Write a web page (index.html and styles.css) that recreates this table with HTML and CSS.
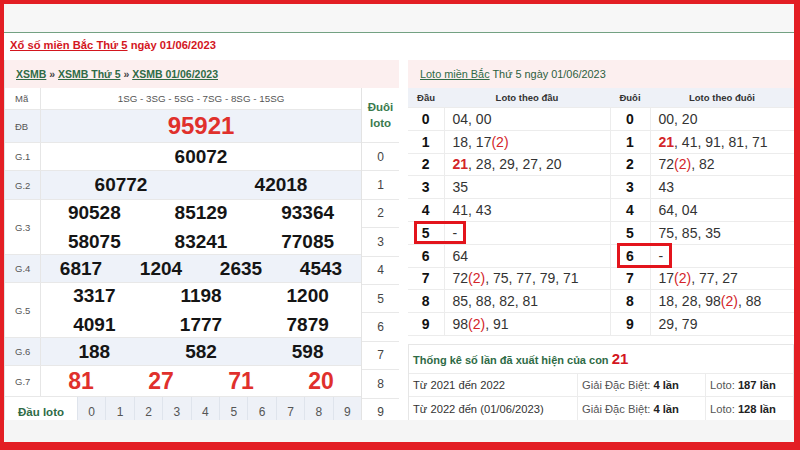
FILE: index.html
```html
<!DOCTYPE html>
<html lang="vi">
<head>
<meta charset="utf-8">
<title>XSMB 01/06/2023</title>
<link rel="stylesheet" href="styles.css">
</head>
<body>
<div class="frame">
  <div class="topbar"></div>
  <div class="content">
    <h1 class="title"><a href="#">Xổ số miền Bắc Thứ 5</a> ngày 01/06/2023</h1>
    <div class="cols">
      <section class="lp">
        <div class="lp-head"><a href="#">XSMB</a> » <a href="#">XSMB Thứ 5</a> » <a href="#">XSMB 01/06/2023</a></div>
        <div class="lp-body">
          <div class="draws">
            <div class="row r-ma"><div class="lbl">Mã</div><div class="val code">1SG - 3SG - 5SG - 7SG - 8SG - 15SG</div></div>
            <div class="row r-db alt"><div class="lbl">ĐB</div><div class="val c1"><span class="n big red">95921</span></div></div>
            <div class="row r-g1"><div class="lbl">G.1</div><div class="val c1"><span class="n">60072</span></div></div>
            <div class="row r-g2 alt"><div class="lbl">G.2</div><div class="val c2"><span class="n">60772</span><span class="n">42018</span></div></div>
            <div class="row r-g3"><div class="lbl">G.3</div><div class="val c3 two"><span class="n">90528</span><span class="n">85129</span><span class="n">93364</span><span class="n">58075</span><span class="n">83241</span><span class="n">77085</span></div></div>
            <div class="row r-g4 alt"><div class="lbl">G.4</div><div class="val c4"><span class="n">6817</span><span class="n">1204</span><span class="n">2635</span><span class="n">4543</span></div></div>
            <div class="row r-g5"><div class="lbl">G.5</div><div class="val c3 two"><span class="n">3317</span><span class="n">1198</span><span class="n">1200</span><span class="n">4091</span><span class="n">1777</span><span class="n">7879</span></div></div>
            <div class="row r-g6 alt"><div class="lbl">G.6</div><div class="val c3"><span class="n">188</span><span class="n">582</span><span class="n">598</span></div></div>
            <div class="row r-g7"><div class="lbl">G.7</div><div class="val c4"><span class="n g7 red">81</span><span class="n g7 red">27</span><span class="n g7 red">71</span><span class="n g7 red">20</span></div></div>
            <div class="row r-dau">
              <div class="dau-lbl">Đầu loto</div>
              <div class="dau-c">0</div><div class="dau-c">1</div><div class="dau-c">2</div><div class="dau-c">3</div><div class="dau-c">4</div>
              <div class="dau-c">5</div><div class="dau-c">6</div><div class="dau-c">7</div><div class="dau-c">8</div><div class="dau-c">9</div>
            </div>
          </div>
          <div class="tails">
            <div class="t-head">Đuôi<br>loto</div>
            <div class="t-cell">0</div><div class="t-cell">1</div><div class="t-cell">2</div><div class="t-cell">3</div><div class="t-cell">4</div>
            <div class="t-cell">5</div><div class="t-cell">6</div><div class="t-cell">7</div><div class="t-cell">8</div><div class="t-cell">9</div>
          </div>
        </div>
      </section>

      <section class="rp">
        <div class="rp-head"><a href="#">Loto miền Bắc</a> Thứ 5 ngày 01/06/2023</div>
        <div class="loto">
          <table class="lt">
            <colgroup><col class="w1"><col class="w2"><col class="w3"><col class="w4"></colgroup>
            <thead>
              <tr><th>Đầu</th><th>Loto theo đầu</th><th>Đuôi</th><th>Loto theo đuôi</th></tr>
            </thead>
            <tbody>
              <tr><td class="d">0</td><td class="v">04, 00</td><td class="d">0</td><td class="v">00, 20</td></tr>
              <tr><td class="d">1</td><td class="v">18, 17<span class="rc">(2)</span></td><td class="d">1</td><td class="v"><b class="rb">21</b>, 41, 91, 81, 71</td></tr>
              <tr><td class="d">2</td><td class="v"><b class="rb">21</b>, 28, 29, 27, 20</td><td class="d">2</td><td class="v">72<span class="rc">(2)</span>, 82</td></tr>
              <tr><td class="d">3</td><td class="v">35</td><td class="d">3</td><td class="v">43</td></tr>
              <tr><td class="d">4</td><td class="v">41, 43</td><td class="d">4</td><td class="v">64, 04</td></tr>
              <tr><td class="d">5</td><td class="v">-</td><td class="d">5</td><td class="v">75, 85, 35</td></tr>
              <tr><td class="d">6</td><td class="v">64</td><td class="d">6</td><td class="v">-</td></tr>
              <tr><td class="d">7</td><td class="v">72<span class="rc">(2)</span>, 75, 77, 79, 71</td><td class="d">7</td><td class="v">17<span class="rc">(2)</span>, 77, 27</td></tr>
              <tr><td class="d">8</td><td class="v">85, 88, 82, 81</td><td class="d">8</td><td class="v">18, 28, 98<span class="rc">(2)</span>, 88</td></tr>
              <tr><td class="d">9</td><td class="v">98<span class="rc">(2)</span>, 91</td><td class="d">9</td><td class="v">29, 79</td></tr>
            </tbody>
          </table>
          <span class="mark m1"></span>
          <span class="mark m2"></span>
        </div>
        <div class="stats">
          <div class="st-title">Thống kê số lần đã xuất hiện của con <span class="st-num">21</span></div>
          <div class="st-row"><div class="st-c">Từ 2021 đến 2022</div><div class="st-c muted">Giải Đặc Biệt: <b>4 lần</b></div><div class="st-c muted">Loto: <b>187 lần</b></div></div>
          <div class="st-row"><div class="st-c">Từ 2022 đến (01/06/2023)</div><div class="st-c muted">Giải Đặc Biệt: <b>4 lần</b></div><div class="st-c muted">Loto: <b>128 lần</b></div></div>
        </div>
      </section>
    </div>
  </div>
  <div class="bottombar"></div>
</div>
</body>
</html>
```

FILE: styles.css
```css
html, body {
  margin: 0;
  padding: 0;
}
body {
  background: #e31e24;
  font-family: "Liberation Sans", Arial, sans-serif;
  width: 800px;
  height: 450px;
  overflow: hidden;
}
.frame {
  margin: 4px 6px 8px 4px;
  width: 790px;
  height: 438px;
  background: #fff;
  display: flex;
  flex-direction: column;
  overflow: hidden;
}
.topbar {
  flex: none;
  height: 28px;
  background: #f7f7f7;
  border-bottom: 1px solid #73a182;
}
.content {
  flex: none;
  height: 387px;
  overflow: hidden;
  background: #fff;
}
.bottombar {
  flex: none;
  height: 22px;
  background: #f5f5f5;
}

/* title */
.title {
  margin: 0;
  height: 27px;
  line-height: 25px;
  padding-left: 6px;
  font-size: 11.2px;
  font-weight: bold;
  color: #d3161e;
}
.title a {
  color: inherit;
  text-decoration: underline;
}

.cols {
  display: flex;
  gap: 9px;
  align-items: flex-start;
}

/* left panel */
.lp {
  width: 395px;
  box-sizing: border-box;
  border-left: 1px solid #e3e3e3;
}
.lp-head {
  height: 28px;
  line-height: 28px;
  background: #fcefef;
  padding-left: 11px;
  font-size: 10.5px;
  font-weight: bold;
  color: #444;
}
.lp-head a {
  color: #2f6b46;
  text-decoration: underline;
}
.lp-body {
  display: flex;
}
.draws {
  width: 356px;
}
.row {
  display: flex;
  box-sizing: border-box;
  border-bottom: 1px solid #e8e8e8;
}
.alt {
  background: #eef2f9;
}
.r-ma { height: 22px; }
.r-db { height: 33px; }
.r-g1 { height: 28px; }
.r-g2 { height: 29px; }
.r-g3 { height: 55px; }
.r-g4 { height: 28px; }
.r-g5 { height: 55px; }
.r-g6 { height: 28px; }
.r-g7 { height: 31px; }
.r-dau { height: 28px; border-bottom: none; }

.lbl {
  flex: none;
  width: 36px;
  box-sizing: border-box;
  padding-left: 10px;
  border-right: 1px solid #e6e6e6;
  display: flex;
  align-items: center;
  font-size: 9.5px;
  color: #555;
}
.val {
  flex: 1;
  display: grid;
  align-items: center;
  align-content: center;
  justify-items: center;
}
.code {
  font-size: 9.8px;
  color: #555;
}
.c1 { grid-template-columns: 1fr; }
.c2 { grid-template-columns: repeat(2, 1fr); }
.c3 { grid-template-columns: repeat(3, 1fr); }
.c4 { grid-template-columns: repeat(4, 1fr); }
.two {
  grid-auto-rows: 26px;
  row-gap: 3px;
}
.n {
  font-size: 19px;
  font-weight: bold;
  color: #151515;
  line-height: 26px;
}
.n.red { color: #e0302c; }
.n.big { font-size: 24px; }
.n.g7 { font-size: 23px; }

.dau-lbl {
  flex: none;
  width: 72px;
  display: flex;
  align-items: center;
  justify-content: center;
  padding-top: 2px;
  box-sizing: border-box;
  font-size: 11.5px;
  font-weight: bold;
  color: #2f6b46;
}
.dau-c {
  flex: 1;
  background: #eef1f7;
  border-left: 1px solid #dfe4ec;
  display: flex;
  align-items: center;
  justify-content: center;
  padding-top: 2px;
  box-sizing: border-box;
  font-size: 12px;
  color: #555;
}

.tails {
  width: 38px;
  box-sizing: border-box;
  border-left: 1px solid #e3e3e3;
}
.t-head {
  height: 55px;
  box-sizing: border-box;
  border-bottom: 1px solid #e8e8e8;
  display: flex;
  align-items: center;
  justify-content: center;
  text-align: center;
  font-size: 11.5px;
  line-height: 16px;
  font-weight: bold;
  color: #3a7a4d;
}
.t-cell {
  height: 28.4px;
  box-sizing: border-box;
  border-bottom: 1px solid #e8e8e8;
  display: flex;
  align-items: center;
  justify-content: center;
  font-size: 12px;
  color: #444;
}

/* right panel */
.rp {
  width: 386px;
}
.rp-head {
  height: 28px;
  line-height: 28px;
  background: #fcefef;
  padding-left: 12px;
  font-size: 10.9px;
  color: #2c5e3d;
}
.rp-head a {
  color: #2f6b46;
  text-decoration: underline;
}
.loto {
  position: relative;
}
.lt {
  width: 386px;
  table-layout: fixed;
  border-collapse: collapse;
}
.w1 { width: 36px; }
.w2 { width: 166px; }
.w3 { width: 40px; }
.w4 { width: 144px; }
.lt th {
  height: 19px;
  padding: 0;
  background: #eef1f7;
  font-size: 9.5px;
  font-weight: bold;
  color: #333;
  text-align: center;
}
.lt tbody tr {
  height: 22.8px;
}
.lt td {
  padding: 0;
  border-top: 1px solid #ececec;
  border-left: 1px solid #ececec;
  font-size: 14px;
  color: #333;
  white-space: nowrap;
}
.lt td:first-child {
  border-left: none;
}
.lt td.d {
  text-align: center;
  font-weight: bold;
  color: #111;
}
.lt td.v {
  padding-left: 8px;
}
.lt tbody tr:last-child td {
  border-bottom: 1px solid #ececec;
}
.rc {
  color: #d3252a;
}
.rb {
  color: #d3252a;
}
.mark {
  position: absolute;
  box-sizing: border-box;
  border: 3px solid #e3141c;
}
.m1 {
  left: 6px;
  top: 133px;
  width: 52px;
  height: 23px;
}
.m2 {
  left: 209px;
  top: 155px;
  width: 55px;
  height: 25px;
}

.stats {
  margin-top: 8px;
  border: 1px solid #e6e6e6;
}
.st-title {
  height: 28px;
  line-height: 28px;
  padding-left: 4px;
  font-size: 11px;
  font-weight: bold;
  color: #2f6b46;
}
.st-num {
  font-size: 15px;
  color: #d3161e;
}
.st-row {
  display: grid;
  grid-template-columns: 168px 128px 1fr;
  height: 22.5px;
  border-top: 1px solid #ececec;
}
.st-c {
  display: flex;
  align-items: center;
  padding-left: 4px;
  border-left: 1px solid #ececec;
  font-size: 11.2px;
  color: #333;
  white-space: nowrap;
  gap: 3px;
}
.st-c:first-child {
  border-left: none;
}
.muted {
  color: #555;
}
.muted b {
  color: #222;
}
```
